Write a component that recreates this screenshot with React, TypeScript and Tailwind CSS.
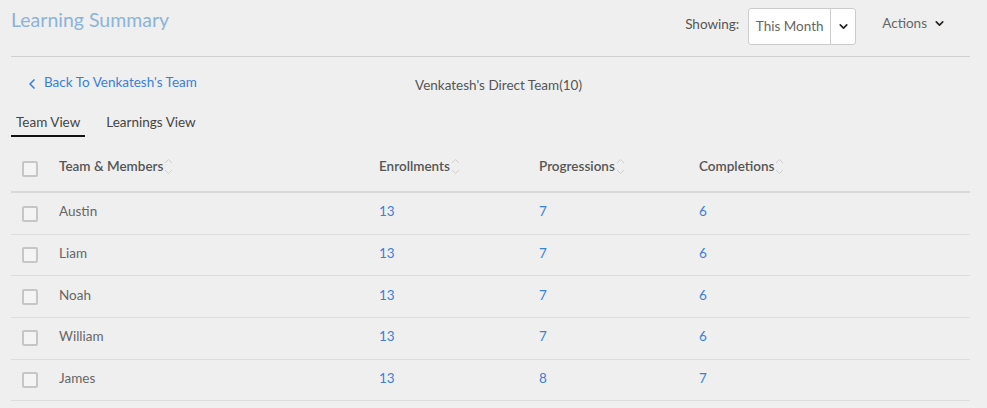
import { ChevronDown, ChevronLeft } from 'lucide-react';

const rows = [
  { name: 'Austin', enrollments: 13, progressions: 7, completions: 6 },
  { name: 'Liam', enrollments: 13, progressions: 7, completions: 6 },
  { name: 'Noah', enrollments: 13, progressions: 7, completions: 6 },
  { name: 'William', enrollments: 13, progressions: 7, completions: 6 },
  { name: 'James', enrollments: 13, progressions: 8, completions: 7 },
];

function Checkbox() {
  return <span className="block h-4 w-4 rounded-[2px] border-2 border-[#c6c6c6] bg-[#f4f4f4]" />;
}

function SortIcon() {
  return (
    <svg width="9" height="17" viewBox="0 0 9 17" fill="none" className="ml-[1px] mt-[1px]">
      <path d="M1 5 L4.5 1.5 L8 5" stroke="#cfcfcf" strokeWidth="1" />
      <path d="M1 12 L4.5 15.5 L8 12" stroke="#cfcfcf" strokeWidth="1" />
    </svg>
  );
}

function HeaderCell({ label }: { label: string }) {
  return (
    <div className="flex items-center">
      <span className="font-semibold text-[#555]">{label}</span>
      <SortIcon />
    </div>
  );
}

export default function App() {
  return (
    <div className="h-[408px] w-[987px] overflow-hidden bg-[#efefef] pl-[11px] pr-[17px] font-['Lato',sans-serif] text-[13.5px]">
      <header className="flex h-[57px] items-start border-b border-[#cfcfcf]">
        <h1 className="mt-[6px] flex-1 text-[19.5px] leading-[28px] text-[#8db3d6]">Learning Summary</h1>
        <div className="mt-[8px] flex items-center">
          <span className="mr-[9px] -mt-[4px] text-[#555]">Showing:</span>
          <div className="flex h-[37px] w-[108px] items-stretch rounded-[3px] border border-[#cccccc] bg-white">
            <span className="flex flex-1 items-center justify-center text-[#666]">This Month</span>
            <span className="flex w-[25px] items-center justify-center border-l border-[#cccccc]">
              <ChevronDown size={13} strokeWidth={3} className="text-[#222]" />
            </span>
          </div>
        </div>
        <div className="ml-[26px] mr-[24px] mt-[13px] flex items-center text-[#666]">
          <span>Actions</span>
          <ChevronDown size={13} strokeWidth={3} className="ml-[6px] text-[#222]" />
        </div>
      </header>

      <div className="flex h-[55px] items-center">
        <div className="flex w-[404px] items-center pl-[13px] text-[#3c7fd6]">
          <ChevronLeft size={16} strokeWidth={2.5} className="-mt-[1px]" />
          <span className="ml-[4px] -mt-[4px]">Back To Venkatesh's Team</span>
        </div>
        <span className="mt-[1px] text-[#555]">Venkatesh's Direct Team(10)</span>
      </div>

      <div className="flex gap-[16px]">
        <div className="border-b-2 border-[#111] px-[5px] pb-[3px] text-[#444]">Team View</div>
        <div className="px-[5px] pb-[3px] text-[#444]">Learnings View</div>
      </div>

      <div className="grid h-[56px] grid-cols-[48px_320px_160px_160px_1fr] items-center border-b-2 border-[#d8d8d8] pt-[4px]">
        <div className="pl-[11px] pt-[5px]">
          <Checkbox />
        </div>
        <HeaderCell label="Team & Members" />
        <HeaderCell label="Enrollments" />
        <HeaderCell label="Progressions" />
        <HeaderCell label="Completions" />
      </div>

      {rows.map((r) => (
        <div
          key={r.name}
          className="grid h-[41.6px] grid-cols-[48px_320px_160px_160px_1fr] items-center border-b border-[#dcdcdc] pb-[4px]"
        >
          <div className="pl-[11px] pt-[4px]">
            <Checkbox />
          </div>
          <span className="text-[#666]">{r.name}</span>
          <span className="text-[#3c7fd6]">{r.enrollments}</span>
          <span className="text-[#3c7fd6]">{r.progressions}</span>
          <span className="text-[#3c7fd6]">{r.completions}</span>
        </div>
      ))}
    </div>
  );
}
